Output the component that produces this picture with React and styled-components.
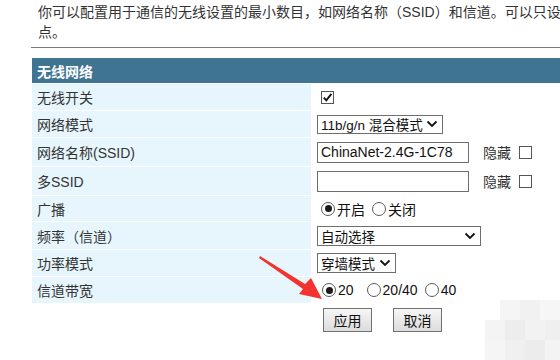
import styled, { createGlobalStyle } from "styled-components";

const GlobalStyle = createGlobalStyle`
  html, body {
    margin: 0;
    padding: 0;
    background: #ffffff;
    overflow: hidden;
  }
  body {
    font-family: "Liberation Sans", "Noto Sans CJK SC", sans-serif;
    font-size: 14px;
    color: #333333;
  }
`;

const Page = styled.div`
  position: relative;
  width: 560px;
  height: 360px;
  overflow: hidden;
`;

const Intro = styled.div`
  margin: 2px 0 0 38px;
  line-height: 20px;
  white-space: nowrap;
  color: #333333;
`;

const Rule = styled.div`
  margin: 5px 0 0 31px;
  width: 640px;
  height: 1px;
  background: #7a7a7a;
`;

const Panel = styled.div`
  margin: 10px 0 0 32px;
  width: 640px;
  display: grid;
  grid-template-columns: 279px 1fr;
  row-gap: 1px;
  column-gap: 1px;
`;

const Header = styled.div`
  grid-column: 1 / span 2;
  height: 25px;
  background: #3f7493;
  color: #ffffff;
  font-weight: bold;
  display: flex;
  align-items: center;
  padding-left: 5px;
`;

const Label = styled.div`
  height: ${(p) => p.$h}px;
  background: #e7f6fd;
  display: flex;
  align-items: center;
  padding-left: 5px;
  color: #333333;
`;

const Value = styled.div`
  height: ${(p) => p.$h}px;
  display: flex;
  align-items: center;
  padding-left: 5px;
  white-space: nowrap;
`;

const Box = styled.span`
  flex: none;
  width: 11px;
  height: 11px;
  border: 1px solid #555555;
  background: #ffffff;
  display: inline-flex;
  align-items: center;
  justify-content: center;
  margin-left: ${(p) => p.$ml || 0}px;
`;

const Select = styled.div`
  flex: none;
  box-sizing: border-box;
  width: ${(p) => p.$w}px;
  height: ${(p) => p.$hh || 19}px;
  border: 1px solid #6e6e6e;
  display: flex;
  align-items: center;
  justify-content: space-between;
  gap: 3px;
  padding: 0 4px 0 3px;
  color: #111111;
  font-size: 13.5px;
  white-space: nowrap;
  & > span {
    overflow: hidden;
  }
  & > svg {
    flex: none;
  }
`;

const TextBox = styled.div`
  flex: none;
  box-sizing: border-box;
  width: 152px;
  height: 21px;
  border: 1px solid #6e6e6e;
  display: flex;
  align-items: center;
  padding-left: 3px;
  color: #111111;
`;

const Hint = styled.span`
  margin-left: 14px;
  color: #333333;
`;

const RadioGroup = styled.label`
  display: inline-flex;
  align-items: center;
  margin-left: ${(p) => p.$ml || 0}px;
  color: #111111;
`;

const Dot = styled.span`
  flex: none;
  box-sizing: border-box;
  width: 14px;
  height: 14px;
  border-radius: 50%;
  border: 1px solid #5a5a5a;
  background: #ffffff;
  display: inline-flex;
  align-items: center;
  justify-content: center;
  margin-right: 2px;
  &::after {
    content: "";
    width: 7px;
    height: 7px;
    border-radius: 50%;
    background: ${(p) => (p.$on ? "#1a1a1a" : "transparent")};
  }
`;

const ButtonRow = styled.div`
  grid-column: 2;
  display: flex;
  gap: 21px;
  padding: 4px 0 0 11px;
`;

const Button = styled.button`
  box-sizing: border-box;
  width: 49px;
  height: 24px;
  border: 1px solid #707070;
  background: linear-gradient(#f6f6f6, #dcdcdc);
  font-family: "Noto Sans CJK SC", sans-serif;
  font-size: 14px;
  color: #111111;
  padding: 0;
`;

const Overlay = styled.svg`
  position: absolute;
  left: 0;
  top: 0;
  pointer-events: none;
`;

const Chevron = () => (
  <svg width="12" height="8" viewBox="0 0 12 8">
    <path d="M1.5 1.5 L6 6 L10.5 1.5" fill="none" stroke="#111" strokeWidth="1.8" />
  </svg>
);

const Check = () => (
  <svg width="11" height="11" viewBox="0 0 11 11">
    <path d="M1.8 5.6 L4.3 8.3 L9.4 1.8" fill="none" stroke="#111" strokeWidth="1.9" />
  </svg>
);

export default function App() {
  return (
    <>
      <GlobalStyle />
      <Page>
        <Intro>
          你可以配置用于通信的无线设置的最小数目，如网络名称（SSID）和信道。可以只设置最小的配置项即可开启无线接入
          <br />
          点。
        </Intro>
        <Rule />
        <Panel>
          <Header>无线网络</Header>

          <Label $h={26}>无线开关</Label>
          <Value $h={26}>
            <Box $ml={4}>
              <Check />
            </Box>
          </Value>

          <Label $h={26}>网络模式</Label>
          <Value $h={26}>
            <Select $w={126} $hh={19}>
              <span>11b/g/n 混合模式</span>
              <Chevron />
            </Select>
          </Value>

          <Label $h={28}>网络名称(SSID)</Label>
          <Value $h={28}>
            <TextBox>ChinaNet-2.4G-1C78</TextBox>
            <Hint>隐藏</Hint>
            <Box $ml={8} />
          </Value>

          <Label $h={28}>多SSID</Label>
          <Value $h={28}>
            <TextBox />
            <Hint>隐藏</Hint>
            <Box $ml={8} />
          </Value>

          <Label $h={25}>广播</Label>
          <Value $h={25}>
            <RadioGroup $ml={4}>
              <Dot $on />
              开启
            </RadioGroup>
            <RadioGroup $ml={7}>
              <Dot />
              关闭
            </RadioGroup>
          </Value>

          <Label $h={27}>频率（信道）</Label>
          <Value $h={27}>
            <Select $w={164} $hh={20}>
              <span>自动选择</span>
              <Chevron />
            </Select>
          </Value>

          <Label $h={26}>功率模式</Label>
          <Value $h={26}>
            <Select $w={79} $hh={20}>
              <span>穿墙模式</span>
              <Chevron />
            </Select>
          </Value>

          <Label $h={26}>信道带宽</Label>
          <Value $h={26}>
            <RadioGroup $ml={5}>
              <Dot $on />
              20
            </RadioGroup>
            <RadioGroup $ml={13}>
              <Dot />
              20/40
            </RadioGroup>
            <RadioGroup $ml={7}>
              <Dot />
              40
            </RadioGroup>
          </Value>

          <div />
          <ButtonRow>
            <Button>应用</Button>
            <Button>取消</Button>
          </ButtonRow>
        </Panel>

        <Overlay width="560" height="360" viewBox="0 0 560 360">
          <g opacity="0.9">
            <rect x="500" y="300" width="20" height="20" fill="#f4f4f4" />
            <rect x="520" y="300" width="20" height="20" fill="#f0f0f0" />
            <rect x="540" y="300" width="20" height="20" fill="#f6f6f6" />
            <rect x="485" y="320" width="20" height="20" fill="#f3f3f3" />
            <rect x="505" y="320" width="20" height="20" fill="#ececec" />
            <rect x="525" y="320" width="20" height="20" fill="#f1f1f1" />
            <rect x="545" y="320" width="15" height="20" fill="#eeeeee" />
            <rect x="485" y="340" width="20" height="20" fill="#f5f5f5" />
            <rect x="505" y="340" width="20" height="20" fill="#efefef" />
            <rect x="525" y="340" width="20" height="20" fill="#ebebeb" />
            <rect x="545" y="340" width="15" height="20" fill="#f2f2f2" />
          </g>
          <polygon
            points="260,256 305,284 311,278 322,299 299,294 303,289 259,258"
            fill="#f2332f"
          />
        </Overlay>
      </Page>
    </>
  );
}
